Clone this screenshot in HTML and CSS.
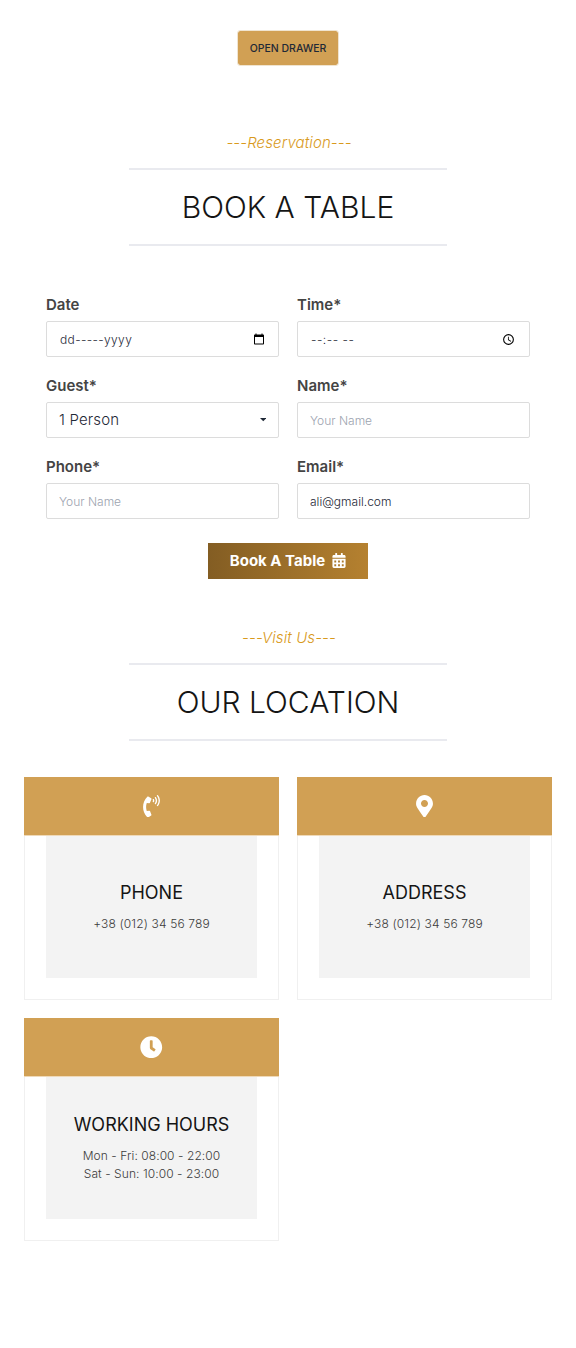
FILE: index.html
```html
<!DOCTYPE html>
<html lang="en">
<head>
<meta charset="utf-8">
<title>Book a table</title>
<link rel="stylesheet" href="styles.css">
</head>
<body>
<button class="drawer-btn">OPEN DRAWER</button>

<section class="reservation">
  <header class="title">
    <p class="eyebrow">---Reservation---</p>
    <h2 class="heading">BOOK A TABLE</h2>
  </header>
  <form class="form">
    <div class="field"><span class="label">Date</span>
      <div class="input"><span class="date">dd-----yyyy</span>
        <svg class="picker" viewBox="0 0 24 24"><path d="M20 3h-1V1h-2v2H7V1H5v2H4c-1.100 0-2 .9-2 2v16c0 1.100.9 2 2 2h16c1.100 0 2-.9 2-2V5c0-1.100-.9-2-2-2zm0 18H4V8h16v13z"/></svg></div></div>
    <div class="field"><span class="label">Time*</span>
      <div class="input"><span class="time">--:-- --</span>
        <svg class="picker clock" viewBox="0 0 24 24"><path d="M12 2a10 10 0 1 0 0 20 10 10 0 0 0 0-20zm0 18a8 8 0 1 1 0-16 8 8 0 0 1 0 16zm.5-13H11v6l5.200 3.200.8-1.300-4.500-2.700z"/></svg></div></div>
    <div class="field"><span class="label">Guest*</span>
      <div class="input select"><span>1 Person</span>
        <svg class="caret" viewBox="0 0 8 4"><path d="M0 0h8L4 4z"/></svg></div></div>
    <div class="field"><label class="label" for="name">Name*</label>
      <input class="input" id="name" placeholder="Your Name"></div>
    <div class="field"><label class="label" for="phone">Phone*</label>
      <input class="input" id="phone" placeholder="Your Name"></div>
    <div class="field"><label class="label" for="email">Email*</label>
      <input class="input" id="email" value="ali@gmail.com"></div>
  </form>
  <button class="submit">Book A Table
    <svg class="cal" viewBox="0 0 448 512"><path fill-rule="evenodd" d="M0 192V112c0-26.500 21.500-48 48-48h48V16c0-8.800 7.200-16 16-16h32c8.800 0 16 7.200 16 16v48h128V16c0-8.800 7.200-16 16-16h32c8.800 0 16 7.200 16 16v48h48c26.500 0 48 21.500 48 48v352c0 26.500-21.500 48-48 48H48c-26.500 0-48-21.500-48-48zM64 256v64h64v-64zm128 0v64h64v-64zm128 0v64h64v-64zM64 384v64h64v-64zm128 0v64h64v-64zm128 0v64h64v-64zM0 160v32h448v-32z"/></svg>
  </button>
</section>

<section class="location">
  <header class="title">
    <p class="eyebrow">---Visit Us---</p>
    <h2 class="heading">OUR LOCATION</h2>
  </header>
  <div class="cards">
    <article class="card">
      <div class="card-top"><svg class="ico narrow" viewBox="0 0 384 512"><path d="M97.333 506.966c-129.874-129.874-129.681-340.252 0-469.933 5.698-5.698 14.527-6.632 21.263-2.422l64.817 40.513a17.187 17.187 0 0 1 6.849 20.958l-32.408 81.021a17.188 17.188 0 0 1-17.669 10.719l-55.810-5.580c-21.051 58.261-20.612 122.471 0 179.515l55.811-5.581a17.188 17.188 0 0 1 17.669 10.719l32.408 81.022a17.188 17.188 0 0 1-6.849 20.958l-64.817 40.513a17.190 17.190 0 0 1-21.265-2.422zM247.126 95.473c11.832 20.047 11.832 45.008 0 65.055-3.950 6.693-13.108 7.959-18.718 2.581l-5.975-5.726c-3.911-3.748-4.793-9.622-2.261-14.410a32.063 32.063 0 0 0 0-29.945c-2.533-4.788-1.650-10.662 2.261-14.410l5.975-5.726c5.610-5.378 14.768-4.112 18.718 2.581zm91.787-91.187c60.140 71.604 60.092 175.882 0 247.428-4.474 5.327-12.530 5.746-17.552.933l-5.798-5.557c-4.560-4.371-4.977-11.529-.930-16.379 49.687-59.538 49.646-145.933 0-205.422-4.047-4.850-3.631-12.008.930-16.379l5.798-5.557c5.022-4.813 13.078-4.394 17.552.933zm-45.972 44.941c36.050 46.322 36.108 111.149 0 157.546-4.390 5.641-12.697 6.251-17.856 1.304l-5.818-5.579c-4.400-4.219-4.998-11.095-1.285-15.931 26.536-34.564 26.534-82.572 0-117.134-3.713-4.836-3.115-11.711 1.285-15.931l5.818-5.579c5.159-4.947 13.466-4.337 17.856 1.304z"/></svg></div>
      <div class="card-body"><h3>PHONE</h3><p>+38 (012) 34 56 789</p></div>
    </article>
    <article class="card">
      <div class="card-top"><svg class="ico narrow" viewBox="0 0 384 512"><path d="M172.268 501.670C26.970 291.031 0 269.413 0 192 0 85.961 85.961 0 192 0s192 85.961 192 192c0 77.413-26.970 99.031-172.268 309.670-9.535 13.774-29.930 13.773-39.464 0zM192 272c44.183 0 80-35.817 80-80s-35.817-80-80-80-80 35.817-80 80 35.817 80 80 80z"/></svg></div>
      <div class="card-body"><h3>ADDRESS</h3><p>+38 (012) 34 56 789</p></div>
    </article>
    <article class="card">
      <div class="card-top"><svg class="ico" viewBox="0 0 512 512"><path d="M256,8C119,8,8,119,8,256S119,504,256,504,504,393,504,256,393,8,256,8Zm92.490,313h0l-20,25a16,16,0,0,1-22.490,2.500h0l-67-49.720a40,40,0,0,1-15-31.230V112a16,16,0,0,1,16-16h32a16,16,0,0,1,16,16V256l58,42.500A16,16,0,0,1,348.490,321Z"/></svg></div>
      <div class="card-body hours"><h3>WORKING HOURS</h3><p>Mon - Fri: 08:00 - 22:00</p><p>Sat - Sun: 10:00 - 23:00</p></div>
    </article>
  </div>
</section>
</body>
</html>
```
FILE: styles.css
```css
* { box-sizing: border-box; margin: 0; }
body {
  min-height: 1348px;
  padding-top: 30px;
  background: #fff;
  color: #3c3c3c;
  font: 300 12px/18px Inter, sans-serif;
}
button { font-family: inherit; }
.drawer-btn {
  display: block;
  width: 102px;
  height: 36px;
  margin: 0 auto;
  padding: 0;
  border: 1px solid #f0e4d0;
  border-radius: 3px;
  background: #d1a054;
  background-clip: padding-box;
  color: #1f2937;
  font-size: 10.500px;
  font-weight: 450;
}
.reservation { padding-top: 65px; }
.title { width: 318px; margin: 0 auto; text-align: center; }
.eyebrow {
  height: 37px;
  padding-left: 2px;
  color: #d99a1c;
  font-size: 15px;
  font-style: italic;
  line-height: 24px;
  letter-spacing: .1px;
}
.heading {
  height: 78px;
  border: solid #e9eaef;
  border-width: 2px 0;
  color: #151515;
  font-size: 30px;
  font-weight: 300;
  line-height: 75px;
}
.form {
  display: grid;
  grid-template-columns: 1fr 1fr;
  gap: 18px;
  padding: 48px 46px 0;
}
.field { display: flex; flex-direction: column; height: 63px; }
.label { height: 27px; color: #444; font-size: 15px; font-weight: 600; line-height: 22px; }
.input {
  display: flex;
  align-items: center;
  justify-content: space-between;
  width: 100%;
  height: 36px;
  padding: 0 12px;
  border: 1px solid #dcdcdc;
  border-radius: 2px;
  background: #fff;
  color: #1f2937;
  font: 300 12px/18px Inter, sans-serif;
}
.input::placeholder { color: #9ca3af; opacity: 1; font-weight: 350; }
.date, .time { padding: 1px 0 0 1px; letter-spacing: .35px; }
.time { letter-spacing: .5px; }
.select { font-size: 15px; letter-spacing: .15px; }
.picker { width: 12px; height: 12px; margin-right: 1px; fill: #000; }
.clock { width: 13px; height: 13px; margin-right: 2px; }
.caret { width: 6.500px; height: 3.250px; fill: #1f2937; }
.submit {
  display: flex;
  align-items: center;
  justify-content: center;
  gap: 7px;
  width: 160px;
  height: 36px;
  margin: 24px auto 0;
  padding: 0 0 1px;
  border: 0;
  background: linear-gradient(90deg, #835d23, #b58130);
  color: #fff;
  font-size: 15px;
  font-weight: 700;
}
.cal { width: 14px; height: 15px; fill: #fff; }
.location { padding-top: 47px; }
.cards { display: grid; grid-template-columns: 255px 255px; gap: 18px; padding: 36px 24px 0; }
.card { height: 223px; border: 1px solid #f0f0f0; border-top: 0; }
.card-top {
  display: flex;
  align-items: center;
  justify-content: center;
  height: 59px;
  margin: 0 -1px;
  border-bottom: 1px solid #efd9b8;
  background: #d1a054;
  background-clip: padding-box;
}
.ico { width: 22.500px; height: 22.500px; fill: #fff; }
.narrow { width: 17px; }
.card-body {
  display: flex;
  flex-direction: column;
  justify-content: center;
  height: 142px;
  margin: 0 21px;
  padding-bottom: 2px;
  background: #f3f3f3;
  text-align: center;
}
.card-body h3 { margin-bottom: 9px; color: #151515; font-size: 18px; font-weight: 400; line-height: 27px; }
.card-body p { letter-spacing: .14px; }
.hours p { letter-spacing: .07px; }
```
